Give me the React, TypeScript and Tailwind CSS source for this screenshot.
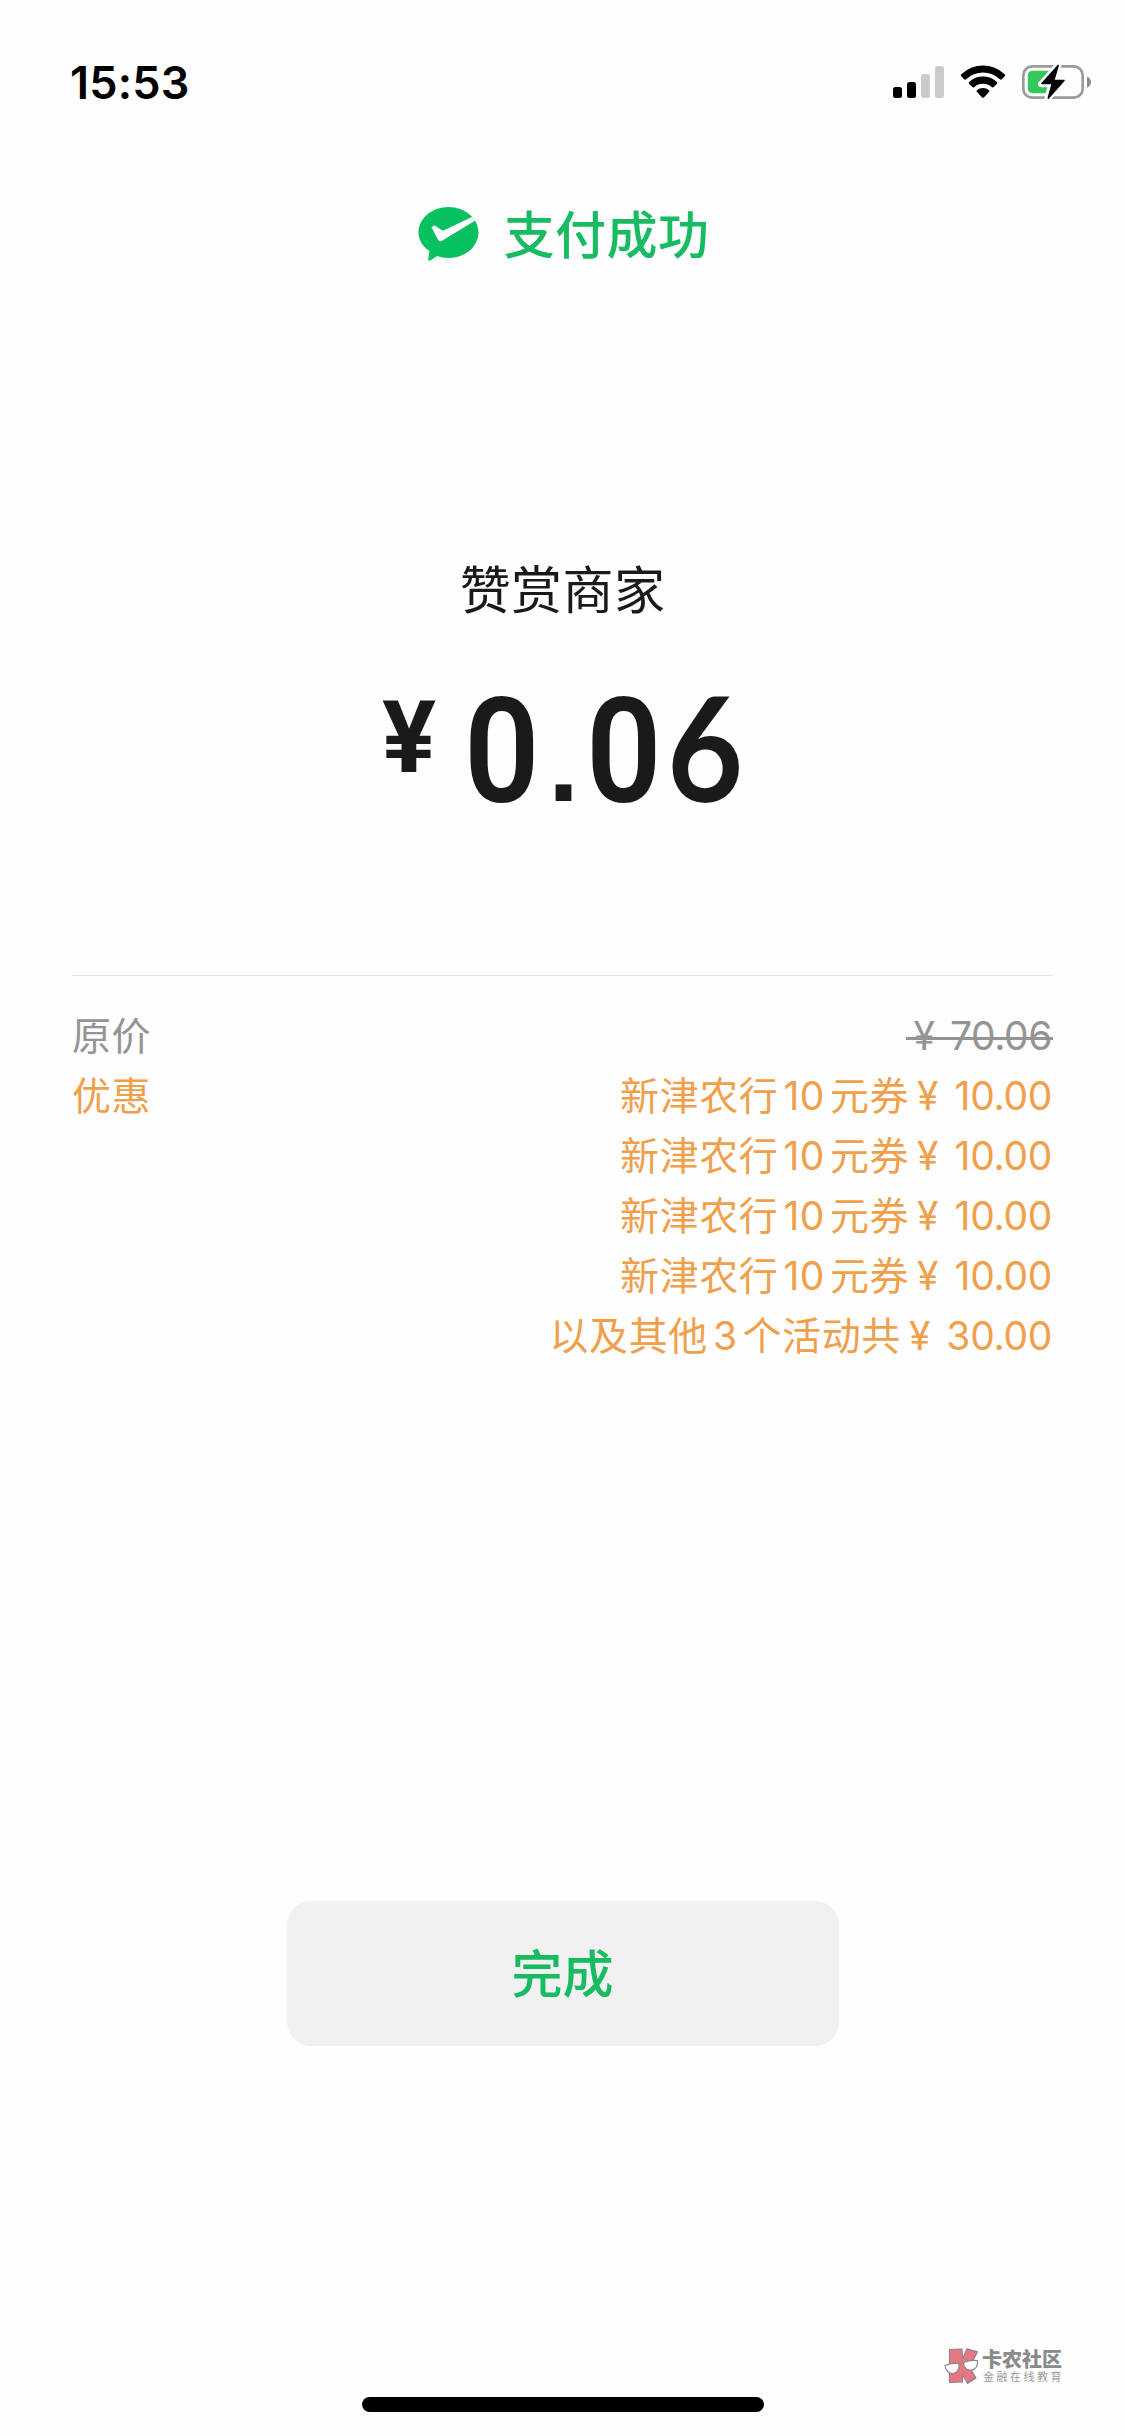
const discounts = [
  { before: '新津农行', count: '10', after: '元券', amount: '10.00' },
  { before: '新津农行', count: '10', after: '元券', amount: '10.00' },
  { before: '新津农行', count: '10', after: '元券', amount: '10.00' },
  { before: '新津农行', count: '10', after: '元券', amount: '10.00' },
  { before: '以及其他', count: '3', after: '个活动共', amount: '30.00' },
];

const StatusBar = () => (
  <div className="h-[164px] pl-[70px] pr-[33px] flex items-center justify-between">
    <span className="text-[45px] leading-none font-semibold text-black tracking-[0.2px]">
      15:53
    </span>
    <svg className="w-[200px] h-[36px] shrink-0" viewBox="892 64 200 36" fill="none">
      {/* Signal */}
      <rect x="893" y="87" width="9" height="11" rx="2.5" fill="#000" />
      <rect x="907" y="82" width="9" height="16" rx="2.5" fill="#000" />
      <rect x="921" y="74" width="9" height="24" rx="2.5" fill="#cbcbcb" />
      <rect x="935" y="66" width="9" height="32" rx="2.5" fill="#cbcbcb" />
      {/* Wifi */}
      <path
        d="M961.3 74.2a31.5 31.5 0 0 1 43.4 0c.7.7.7 1.4.1 2l-3 3c-.6.6-1.3.6-1.9 0a24.5 24.5 0 0 0-33.8 0c-.6.6-1.3.6-1.9 0l-3-3c-.6-.6-.6-1.3.1-2z"
        fill="#000"
      />
      <path
        d="M969.2 82a20.3 20.3 0 0 1 27.6 0c.6.6.6 1.3 0 1.9l-3.2 3.2c-.6.6-1.2.6-1.8.1a13.3 13.3 0 0 0-17.6 0c-.6.5-1.2.5-1.8-.1l-3.2-3.2c-.6-.6-.6-1.3 0-1.9z"
        fill="#000"
      />
      <path
        d="M977 90.2a9.3 9.3 0 0 1 12 0c.6.5.6 1.2 0 1.8l-5.1 5.4c-.6.6-1.2.6-1.8 0l-5.1-5.4c-.6-.6-.6-1.3 0-1.8z"
        fill="#000"
      />
      {/* Battery */}
      <rect x="1023.3" y="66.3" width="59.4" height="31.4" rx="9" stroke="#9b9b9b" strokeWidth="2.7" />
      <path d="M1087 76.4c5.4 2.2 5.4 9.2 0 11.4z" fill="#8e8e8e" />
      <path d="M1033 70.8h19v22.4h-19q-5.2 0-5.2-5.2v-12q0-5.2 5.2-5.2z" fill="#34c759" />
      <path
        d="M1058.5 64.5L1041 84.2h10.2l-4 14.9L1065 79.8h-10.2z"
        fill="#000"
        stroke="#fff"
        strokeWidth="6"
        strokeLinejoin="round"
      />
      <path
        d="M1058.2 65.5L1042 83.5h10.3l-4.1 14.8L1064 80.4h-10.2z"
        fill="#000"
        stroke="#000"
        strokeWidth="1.5"
        strokeLinejoin="round"
      />
    </svg>
  </div>
);

const Watermark = () => (
  <div className="flex items-start h-[36px] gap-[3px]">
    <svg className="w-[35px] h-[36px]" viewBox="0 0 35 36">
      <g stroke="#8c8686" strokeWidth="1.2" strokeLinejoin="round">
        <path
          d="M5.5 1.5L18 1l.5 10L23 .8l10.5 3L25.5 19l6.5 11-8.5 5.5-5-9v7.5l-13 .5z"
          fill="#e97683"
        />
        <path d="M1 17.5c4-2 9-2.5 14-2 .6 6-2 9.5-6 10-4 .4-7.4-3-8-8z" fill="#fff" />
        <path d="M19.5 14.5c4.5-2 9-2.6 14-2 .4 5-1.5 8.7-6 9.6-4.5.7-8-2.8-8-7.6z" fill="#fff" />
        <path d="M15 16l4.5-1" fill="none" />
      </g>
    </svg>
    <div className="flex flex-col">
      <span className="h-[23px] pt-px text-[20px] leading-[22px] font-black text-[#8a8a8a]">卡农社区</span>
      <span className="h-[12px] pl-[1px] text-[11px] leading-[12px] text-[#999] tracking-[2.5px]">
        金融在线教育
      </span>
    </div>
  </div>
);

const App = () => {
  return (
    <div className="w-[1125px] h-[2436px] bg-[#fefefe] flex flex-col overflow-hidden whitespace-nowrap font-['Inter','Noto_Sans_CJK_SC',sans-serif]">
      <StatusBar />

      {/* Result */}
      <div className="mt-[42px] h-[56px] pl-[2px] flex items-center justify-center gap-[25px]">
        <svg className="w-[61px] h-[56px]" viewBox="0 0 61 56">
          <path
            d="M30.5 1C47 1 60.5 12.5 60.5 26.5S47 52 30.5 52c-4 0-8-.7-11.3-1.9l-7 4.4c-1.2.7-2.2.1-2-1.2l1.2-8.3C4.8 40.5.5 34 .5 26.5.5 12.5 14 1 30.5 1z"
            fill="#07c160"
          />
          <path
            d="M13.5 21.2l2.2-1.4c.6-.4 1.2-.3 1.8.1l6.5 4.3c.6.4 1.2.4 1.9.1L54 11l3.300 3.500-33.300 20.300c-1.700 1-3 .5-3.900-1z"
            fill="#fefefe"
          />
        </svg>
        <span className="pt-[2px] text-[51px] leading-none font-medium text-[#19bb62] tracking-[0.4px]">
          支付成功
        </span>
      </div>

      {/* Amount */}
      <div className="mt-[302px] h-[52px] flex items-center justify-center text-[51px] leading-none text-[#1a1a1a] tracking-[0.4px]">
        赞赏商家
      </div>
      <div className="mt-[66px] h-[130px] pl-[382px] flex text-[#1a1a1a] font-bold font-['Roboto',sans-serif]">
        <span className="w-[82px] pt-[2px] text-[101px] leading-[107px]">¥</span>
        <span className="w-[84px] pt-[5px] text-[147px] leading-[130px] font-semibold origin-left scale-x-90">0</span>
        <span className="w-[38px] pt-[16px] text-[112px] leading-[130px] font-['Liberation_Sans',sans-serif]">.</span>
        <span className="w-[81px] pt-[5px] text-[147px] leading-[130px] font-semibold origin-left scale-x-90">0</span>
        <span className="text-[146px] leading-[128px] font-['Lato',sans-serif] origin-left scale-x-90">6</span>
      </div>

      <div className="mt-[163px] mx-[72px] h-px bg-[#e4e4e4]" />

      {/* Price details */}
      <div className="mt-[30px] mx-[72px] flex justify-between text-[39px] leading-[60px]">
        <div className="flex flex-col tracking-[0.4px]">
          <span className="h-[60px] text-[#949494]">原价</span>
          <span className="h-[60px] text-[#f0a04b]">优惠</span>
        </div>
        <div className="flex flex-col items-end">
          <div className="relative h-[60px] pl-[7px] pr-px flex gap-[15px] text-[#949494]">
            <span>¥</span>
            <span className="tracking-[-0.4px]">70.06</span>
            <span className="absolute left-0 right-0 top-[31px] h-[3px] bg-[#949494]" />
          </div>
          {discounts.map((item, index) => (
            <div key={index} className="h-[60px] pr-px flex text-[#f0a04b]">
              <span className="tracking-[0.6px]">{item.before}</span>
              <span className="mx-[5px] tracking-[0.5px]">{item.count}</span>
              <span className="tracking-[0.6px]">{item.after}</span>
              <span className="ml-[8px] mr-[16px]">¥</span>
              <span className="tracking-[-0.3px]">{item.amount}</span>
            </div>
          ))}
        </div>
      </div>

      <button className="mt-[535px] w-[552px] h-[145px] pt-[2px] self-center shrink-0 rounded-[24px] bg-[#f1f1f1] flex items-center justify-center text-[51px] leading-none font-medium text-[#19bb62]">
        完成
      </button>

      <div className="mt-[302px] h-[36px] pr-[61px] flex justify-end">
        <Watermark />
      </div>
      <div className="mt-[13px] w-[402px] h-[15px] shrink-0 self-center rounded-full bg-black" />
    </div>
  );
};

export default App;
